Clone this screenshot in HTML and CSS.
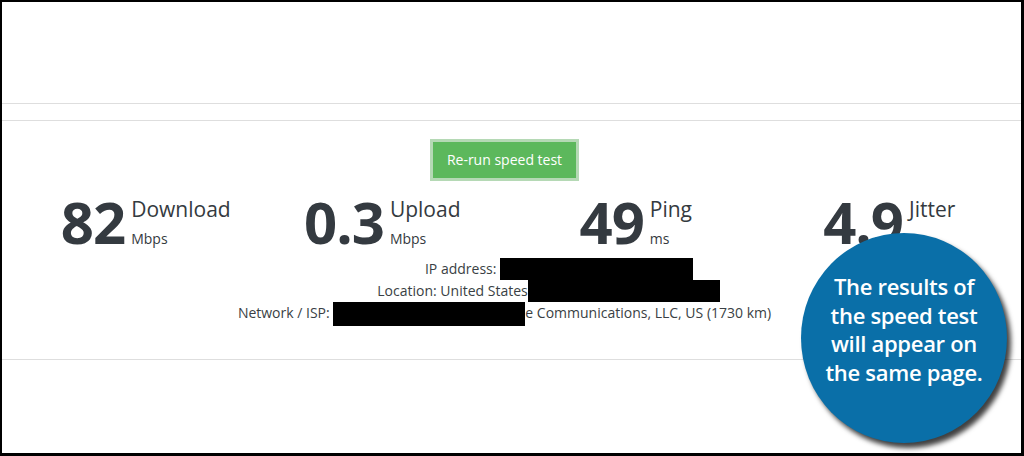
FILE: index.html
```html
<!DOCTYPE html>
<html lang="en">
<head>
<meta charset="utf-8">
<title>Speed test results</title>
<link rel="stylesheet" href="styles.css">
</head>
<body>
<div class="frame">
  <div class="top"></div>
  <div class="strip"></div>
  <section class="results">
    <button class="rerun" type="button">Re-run speed test</button>
    <div class="stats">
      <div class="stat first">
        <span class="num">82</span>
        <span class="lbl"><span class="name">Download</span><span class="unit">Mbps</span></span>
      </div>
      <div class="stat">
        <span class="num">0.3</span>
        <span class="lbl"><span class="name">Upload</span><span class="unit">Mbps</span></span>
      </div>
      <div class="stat">
        <span class="num">49</span>
        <span class="lbl"><span class="name">Ping</span><span class="unit">ms</span></span>
      </div>
      <div class="stat">
        <span class="num">4.9</span>
        <span class="lbl"><span class="name">Jitter</span><span class="unit">ms</span></span>
      </div>
    </div>
    <div class="info">
      <div class="line">IP address: <span class="redact r-ip"></span></div>
      <div class="line">Location: United States<span class="redact r-loc"></span></div>
      <div class="line">Network / ISP: <span class="redact r-isp"></span>e Communications, LLC, US (1730 km)</div>
    </div>
  </section>
  <div class="bottom"></div>
  <div class="callout">The results of<br>the speed test<br>will appear on<br>the same page.</div>
</div>
</body>
</html>
```
FILE: styles.css
```css
* { box-sizing: border-box; }
html, body { margin: 0; padding: 0; background: #fff; }
body { font-family: "Open Sans", "Noto Sans", sans-serif; color: #343a40; }

.frame {
  position: relative;
  width: 1024px;
  height: 456px;
  border: 2px solid #000;
  border-right-width: 3px;
  border-bottom-width: 3px;
  overflow: hidden;
  display: flex;
  flex-direction: column;
}

.top { height: 101px; }
.strip {
  height: 18px;
  border-top: 1px solid #dedede;
  border-bottom: 1px solid #dedede;
}

.results {
  display: flex;
  flex-direction: column;
  align-items: center;
  padding-top: 18px;
  height: 239px;
  border-bottom: 1px solid #dedede;
}

.rerun {
  font-family: "Open Sans", sans-serif;
  font-size: 14px;
  color: #fff;
  background: #5cb85c;
  border: 3px solid #b5d9b5;
  width: 149px;
  height: 42px;
  padding: 0;
  margin-right: 14px;
  line-height: 34px;
  cursor: pointer;
}

.stats {
  align-self: stretch;
  display: grid;
  grid-template-columns: repeat(4, 1fr);
  margin-top: 11px;
  margin-right: 5px;
}
.stat {
  display: flex;
  justify-content: center;
  align-items: flex-start;
}
.stat.first { padding-left: 34px; }

.num {
  font-size: 58px;
  font-weight: 700;
  line-height: 60px;
  letter-spacing: -1px;
  color: #343a40;
}
.lbl {
  display: flex;
  flex-direction: column;
  margin-left: 6px;
  padding-top: 4px;
}
.name {
  font-size: 21px;
  line-height: 26px;
  color: #343a40;
}
.unit {
  font-size: 14px;
  line-height: 20px;
  margin-top: 7px;
  color: #343a40;
}

.info {
  margin-top: 6px;
  margin-right: 14px;
  font-size: 14px;
  line-height: 22px;
  color: #3a3f44;
  text-align: center;
}
.line { white-space: nowrap; }
.redact {
  display: inline-block;
  background: #000;
  height: 22px;
  vertical-align: top;
}
.r-ip { width: 193px; margin-right: -109px; }
.r-loc { width: 192px; margin-right: -88px; }
.r-isp { width: 192px; height: 24px; }

.bottom { flex: 1; }

.callout {
  position: absolute;
  left: 799px;
  top: 231px;
  width: 206px;
  height: 210px;
  border-radius: 50%;
  background: #0a6fa8;
  box-shadow: 4px 5px 5px rgba(0, 0, 0, 0.75);
  color: #fff;
  font-family: "Open Sans", sans-serif;
  font-weight: 600;
  font-size: 22px;
  line-height: 28.5px;
  letter-spacing: -0.3px;
  text-align: center;
  display: flex;
  align-items: center;
  justify-content: center;
  padding-bottom: 18px;
}
```
